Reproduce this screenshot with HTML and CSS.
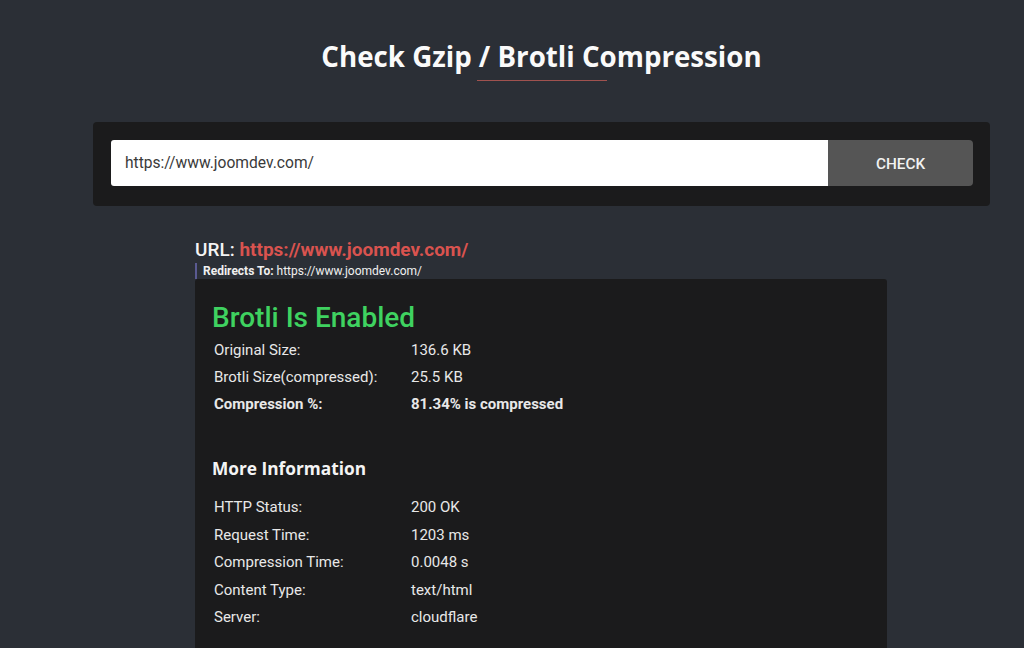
FILE: index.html
```html
<!DOCTYPE html>
<html>
<head>
<meta charset="utf-8">
<link rel="stylesheet" href="styles.css">
</head>
<body>
<div class="wrap">
  <h1 class="title">Check Gzip / Brotli Compression</h1>
  <div class="rule"></div>
  <form class="panel">
    <input class="url-input" type="text" value="https://www.joomdev.com/">
    <button class="check-btn" type="button">CHECK</button>
  </form>
  <div class="result">
    <div class="url-line">URL: <span class="url-link">https://www.joomdev.com/</span></div>
    <div class="redirect"><b>Redirects To:</b> https://www.joomdev.com/</div>
    <div class="card">
      <h2 class="status">Brotli Is Enabled</h2>
      <div class="rows">
        <div>Original Size:</div><div>136.6 KB</div>
        <div>Brotli Size(compressed):</div><div>25.5 KB</div>
        <div class="strong">Compression %:</div><div class="strong">81.34% is compressed</div>
      </div>
      <h3 class="more">More Information</h3>
      <div class="rows rows-info">
        <div>HTTP Status:</div><div>200 OK</div>
        <div>Request Time:</div><div>1203 ms</div>
        <div>Compression Time:</div><div>0.0048 s</div>
        <div>Content Type:</div><div>text/html</div>
        <div>Server:</div><div>cloudflare</div>
      </div>
    </div>
  </div>
</div>
</body>
</html>
```
FILE: styles.css
```css
html, body {
  margin: 0;
  padding: 0;
  background: #2b2f36;
  height: 100%;
  overflow: hidden;
}
body {
  font-family: Roboto, "Liberation Sans", sans-serif;
  color: #e6e6e6;
}
.wrap {
  margin-left: 93px;
  width: 897px;
  padding-top: 38px;
}
.title {
  margin: 0;
  text-align: center;
  font-family: "Open Sans", sans-serif;
  font-weight: 700;
  font-size: 27.7px;
  line-height: 36px;
  color: #fafafa;
}
.rule {
  width: 130px;
  height: 1px;
  background: #a0524f;
  margin: 6px auto 0;
}
.panel {
  margin: 41px 0 0;
  background: #1b1b1c;
  border-radius: 4px;
  padding: 18px 17px 20px 18px;
  display: flex;
}
.url-input {
  flex: 1;
  height: 46px;
  box-sizing: border-box;
  border: 0;
  border-radius: 3px 0 0 3px;
  background: #ffffff;
  padding: 0 14px;
  font-family: Roboto, sans-serif;
  font-size: 15.6px;
  color: #3a3a3a;
  outline: none;
}
.check-btn {
  width: 145px;
  height: 46px;
  border: 0;
  border-radius: 0 4px 4px 0;
  background: #555555;
  color: #f2f2f2;
  font-family: Roboto, sans-serif;
  font-weight: 500;
  font-size: 15.3px;
  padding-top: 2px;
}
.result {
  width: 692px;
  margin: 32px 0 0 102px;
}
.url-line {
  font-size: 19px;
  font-weight: 500;
  line-height: 24px;
  color: #f4f4f4;
}
.url-link {
  color: #d9534f;
  font-weight: 700;
}
.redirect {
  margin-top: 1px;
  border-left: 2px solid #5a5a92;
  padding-left: 6px;
  font-size: 12px;
  line-height: 16px;
  color: #f0f0f0;
}
.redirect b { font-weight: 700; }
.card {
  background: #1b1b1c;
  border-radius: 3px;
  padding: 21px 17px 40px 17px;
  min-height: 400px;
}
.status {
  margin: 0 0 1px;
  font-size: 28px;
  font-weight: 500;
  line-height: 36px;
  color: #3fd260;
}
.rows {
  display: grid;
  grid-template-columns: 197px auto;
  padding-left: 2px;
  font-size: 15px;
  line-height: 27px;
  color: #e8e8e8;
}
.rows-info {
  line-height: 27.5px;
}
.rows .strong { font-weight: 700; }
.more {
  margin: 39px 0 13px;
  font-family: "Open Sans", sans-serif;
  font-weight: 700;
  font-size: 17.3px;
  line-height: 24px;
  color: #f4f4f4;
}
```
